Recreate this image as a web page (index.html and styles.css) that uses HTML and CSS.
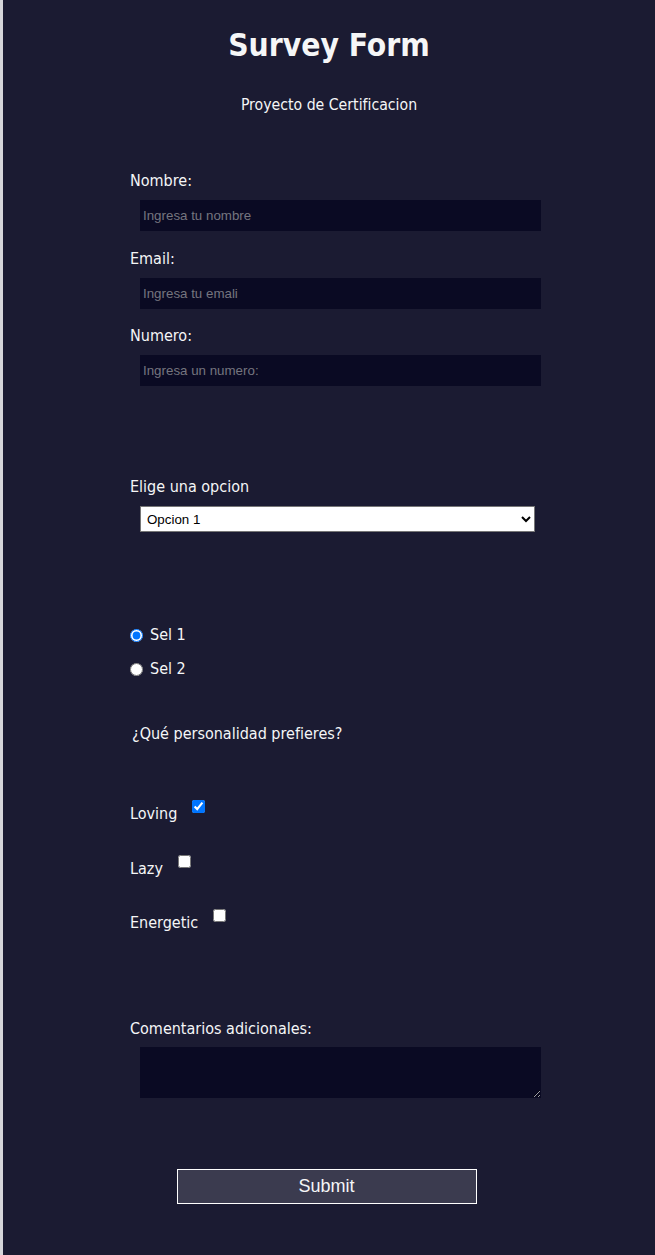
FILE: index.html
```html
<!DOCTYPE html>
<html lang="es">
<head>
<meta charset="utf-8">
<title>Survey Form</title>
<link rel="stylesheet" href="styles.css">
</head>
<body>
<main class="page">
  <h1 class="title" id="title">Survey Form</h1>
  <p class="subtitle" id="description">Proyecto de Certificacion</p>
  <form class="survey" id="survey-form">
    <div class="field">
      <label class="label" for="name">Nombre:</label>
      <input class="text-input" id="name" type="text" placeholder="Ingresa tu nombre">
    </div>
    <div class="field field-next">
      <label class="label" for="email">Email:</label>
      <input class="text-input" id="email" type="email" placeholder="Ingresa tu emali">
    </div>
    <div class="field field-next field-last">
      <label class="label" for="number">Numero:</label>
      <input class="text-input" id="number" type="number" placeholder="Ingresa un numero:">
    </div>
    <div class="field field-select">
      <label class="label" for="dropdown">Elige una opcion</label>
      <select class="select" id="dropdown">
        <option>Opcion 1</option>
        <option>Opcion 2</option>
      </select>
    </div>
    <div class="radios">
      <label class="radio-row"><input class="radio" type="radio" name="sel" value="1" checked>Sel 1</label>
      <label class="radio-row radio-next"><input class="radio" type="radio" name="sel" value="2">Sel 2</label>
    </div>
    <p class="question">¿Qué personalidad prefieres?</p>
    <div class="checks">
      <label class="check-row">Loving<input class="check" type="checkbox" checked></label>
      <label class="check-row check-lazy">Lazy<input class="check" type="checkbox"></label>
      <label class="check-row check-energetic">Energetic<input class="check" type="checkbox"></label>
    </div>
    <div class="field field-comments">
      <label class="label" for="comments">Comentarios adicionales:</label>
      <textarea class="textarea" id="comments"></textarea>
    </div>
    <div class="actions">
      <button class="submit" id="submit" type="submit">Submit</button>
    </div>
  </form>
</main>
</body>
</html>
```

FILE: styles.css
```css
html {
  background: #d6d6da;
}

body {
  margin: 0 0 0 3px;
  min-height: 1255px;
  background: #1b1b32;
  color: #f5f6f7;
  font-family: "DejaVu Sans Condensed", "DejaVu Sans", sans-serif;
  font-stretch: condensed;
  font-size: 16px;
}

.page {
  display: flex;
  flex-direction: column;
  padding-top: 25px;
  padding-bottom: 40px;
}

.title {
  margin: 0;
  text-align: center;
  font-size: 31.5px;
  line-height: 40px;
  font-weight: bold;
}

.subtitle {
  margin: 30px 0 0;
  text-align: center;
  font-size: 15.7px;
  line-height: 20px;
}

.survey {
  margin: 56px 0 0 127px;
  width: 411px;
  display: flex;
  flex-direction: column;
}

.field {
  display: flex;
  flex-direction: column;
}

.field-next {
  margin-top: 18px;
}

.field-last {
  margin-top: 17px;
}

.field-select {
  margin-top: 91px;
}

.field-comments {
  margin-top: 86px;
}

.label {
  display: block;
  line-height: 20px;
}

.text-input {
  margin: 9px 0 0 10px;
  width: 401px;
  height: 31px;
  box-sizing: border-box;
  padding: 0 3px;
  border: none;
  background: #0a0a23;
  color: #f5f6f7;
  font-family: "Liberation Sans", Arial, sans-serif;
  font-size: 13.33px;
  outline: none;
}

.text-input::placeholder {
  color: #75757f;
}

.select {
  margin: 9px 0 0 10px;
  width: 395px;
  height: 26px;
  box-sizing: border-box;
  border: 1px solid #767676;
  border-radius: 0;
  background: #ffffff;
  color: #000000;
  font-family: "Liberation Sans", Arial, sans-serif;
  font-size: 13.33px;
  padding: 0 2px;
}

.radios {
  margin-top: 93px;
  display: flex;
  flex-direction: column;
}

.radio-row {
  display: flex;
  align-items: flex-start;
  line-height: 20px;
}

.radio-next {
  margin-top: 14px;
}

.radio {
  margin: 4px 7px 0 0;
  width: 13px;
  height: 13px;
}

.question {
  margin: 45px 0 0 2px;
  line-height: 20px;
}

.checks {
  margin-top: 60px;
  display: flex;
  flex-direction: column;
}

.check-row {
  display: flex;
  align-items: flex-start;
  line-height: 20px;
}

.check-lazy {
  margin-top: 35px;
}

.check-energetic {
  margin-top: 34px;
}

.check {
  margin: -4px 0 0 15px;
  width: 13px;
  height: 13px;
}

.textarea {
  margin: 8px 0 0 10px;
  width: 401px;
  height: 51px;
  box-sizing: border-box;
  border: none;
  background: #0a0a23;
  color: #f5f6f7;
  outline: none;
}

.actions {
  margin-top: 71px;
  display: flex;
  justify-content: center;
  margin-left: -128px;
  width: 649px;
}

.submit {
  width: 300px;
  height: 35px;
  box-sizing: border-box;
  border: 1px solid #ffffff;
  background: #3b3b4f;
  color: #f5f6f7;
  font-family: "Liberation Sans", Arial, sans-serif;
  font-size: 18px;
  padding: 0;
}
```
